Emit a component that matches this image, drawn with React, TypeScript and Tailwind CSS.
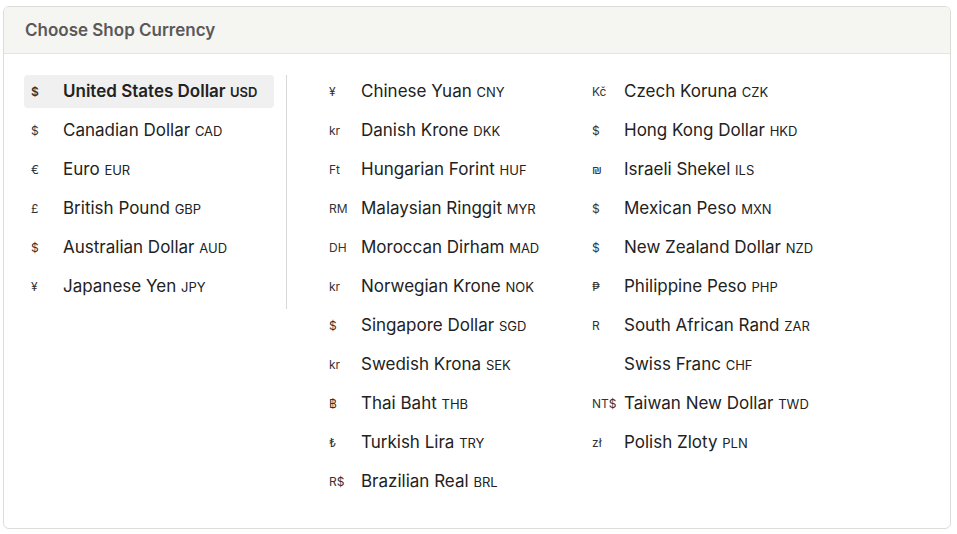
type Currency = {
  symbol: string;
  name: string;
  code: string;
};

const PRIMARY: Currency[] = [
  { symbol: "$", name: "United States Dollar", code: "USD" },
  { symbol: "$", name: "Canadian Dollar", code: "CAD" },
  { symbol: "€", name: "Euro", code: "EUR" },
  { symbol: "£", name: "British Pound", code: "GBP" },
  { symbol: "$", name: "Australian Dollar", code: "AUD" },
  { symbol: "¥", name: "Japanese Yen", code: "JPY" },
];

const MIDDLE: Currency[] = [
  { symbol: "¥", name: "Chinese Yuan", code: "CNY" },
  { symbol: "kr", name: "Danish Krone", code: "DKK" },
  { symbol: "Ft", name: "Hungarian Forint", code: "HUF" },
  { symbol: "RM", name: "Malaysian Ringgit", code: "MYR" },
  { symbol: "DH", name: "Moroccan Dirham", code: "MAD" },
  { symbol: "kr", name: "Norwegian Krone", code: "NOK" },
  { symbol: "$", name: "Singapore Dollar", code: "SGD" },
  { symbol: "kr", name: "Swedish Krona", code: "SEK" },
  { symbol: "฿", name: "Thai Baht", code: "THB" },
  { symbol: "₺", name: "Turkish Lira", code: "TRY" },
  { symbol: "R$", name: "Brazilian Real", code: "BRL" },
];

const RIGHT: Currency[] = [
  { symbol: "Kč", name: "Czech Koruna", code: "CZK" },
  { symbol: "$", name: "Hong Kong Dollar", code: "HKD" },
  { symbol: "₪", name: "Israeli Shekel", code: "ILS" },
  { symbol: "$", name: "Mexican Peso", code: "MXN" },
  { symbol: "$", name: "New Zealand Dollar", code: "NZD" },
  { symbol: "₱", name: "Philippine Peso", code: "PHP" },
  { symbol: "R", name: "South African Rand", code: "ZAR" },
  { symbol: "", name: "Swiss Franc", code: "CHF" },
  { symbol: "NT$", name: "Taiwan New Dollar", code: "TWD" },
  { symbol: "zł", name: "Polish Zloty", code: "PLN" },
];

function CurrencyRow({ currency, selected }: { currency: Currency; selected?: boolean }) {
  return (
    <li
      className={
        selected
          ? "mb-[6px] flex h-[33px] items-center rounded-[4px] bg-[#f0f0f0] px-[7px] font-semibold"
          : "mb-[6px] flex h-[33px] items-center rounded-[4px] px-[7px]"
      }
    >
      <span className="w-[32px] shrink-0 text-[12px] text-[#333]">{currency.symbol}</span>
      <span className="whitespace-nowrap text-[17px] text-[#222]">
        {currency.name}{" "}
        <span className="text-[13px] uppercase">{currency.code}</span>
      </span>
    </li>
  );
}

export default function App() {
  return (
    <div
      className="min-h-[534px] bg-white pt-[6px] pr-[6px] pb-[6px] pl-[3px]"
      style={{ fontFamily: "Inter, 'Noto Sans', sans-serif" }}
    >
      <section className="overflow-hidden rounded-[6px] border border-[#dcdcd8] bg-white">
        <header className="flex h-[47px] items-center border-b border-[#e4e4e0] bg-[#f5f5f1] px-[21px] pt-[1px]">
          <h2 className="text-[17px] font-semibold text-[#595959]">Choose Shop Currency</h2>
        </header>
        <div className="flex items-start pt-[21px] pb-[24px] pl-[20px]">
          <ul className="w-[263px] border-r border-[#d8d8d8] pr-[12px]">
            {PRIMARY.map((c, i) => (
              <CurrencyRow key={c.code} currency={c} selected={i === 0} />
            ))}
          </ul>
          <ul className="ml-[35px] w-[263px]">
            {MIDDLE.map((c) => (
              <CurrencyRow key={c.code} currency={c} />
            ))}
          </ul>
          <ul className="w-[263px]">
            {RIGHT.map((c) => (
              <CurrencyRow key={c.code} currency={c} />
            ))}
          </ul>
        </div>
      </section>
    </div>
  );
}
